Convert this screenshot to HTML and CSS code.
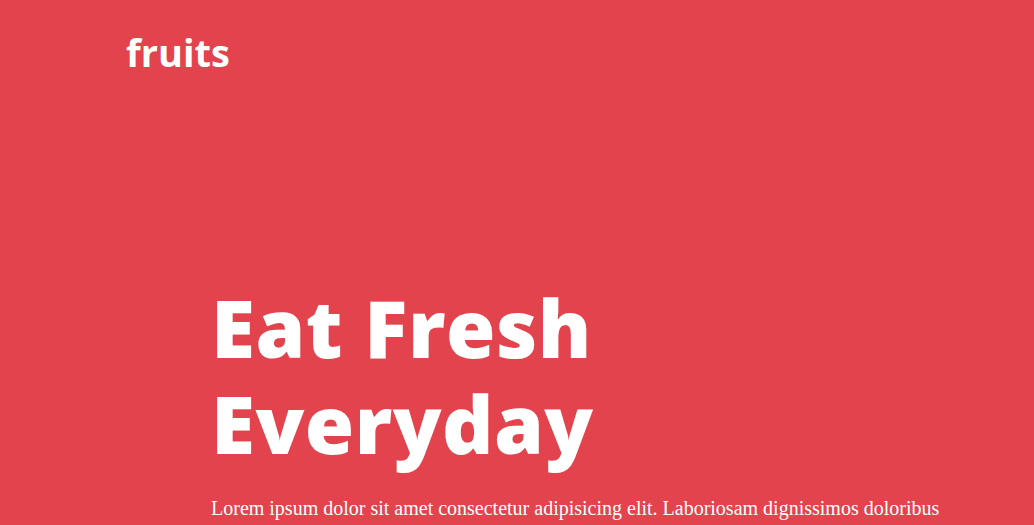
FILE: index.html
```html
<!DOCTYPE html>
<html lang="en">
<head>
<meta charset="utf-8">
<title>fruits</title>
<link rel="stylesheet" href="styles.css">
</head>
<body>
<header class="header">
  <a class="logo" href="#">fruits</a>
</header>
<section class="hero">
  <h1 class="hero-title">Eat Fresh<br>Everyday</h1>
  <p class="hero-text">Lorem ipsum dolor sit amet consectetur adipisicing elit. Laboriosam dignissimos doloribus</p>
</section>
</body>
</html>
```

FILE: styles.css
```css
html, body {
  margin: 0;
  padding: 0;
}
body {
  background: #e2434d;
  color: #fff;
  min-height: 525px;
  overflow: hidden;
}
.header {
  padding: 26px 0 0 126px;
}
.logo {
  font-family: "Open Sans", sans-serif;
  font-weight: 700;
  font-size: 38px;
  line-height: 52px;
  color: #fff;
  text-decoration: none;
}
.hero {
  padding: 201px 0 0 211px;
}
.hero-title {
  margin: 0;
  font-family: "Open Sans", sans-serif;
  font-weight: 800;
  font-size: 80px;
  line-height: 96px;
  letter-spacing: 0.5px;
}
.hero-text {
  margin: 26px 0 0;
  font-family: "Liberation Serif", serif;
  font-size: 20px;
}
```
